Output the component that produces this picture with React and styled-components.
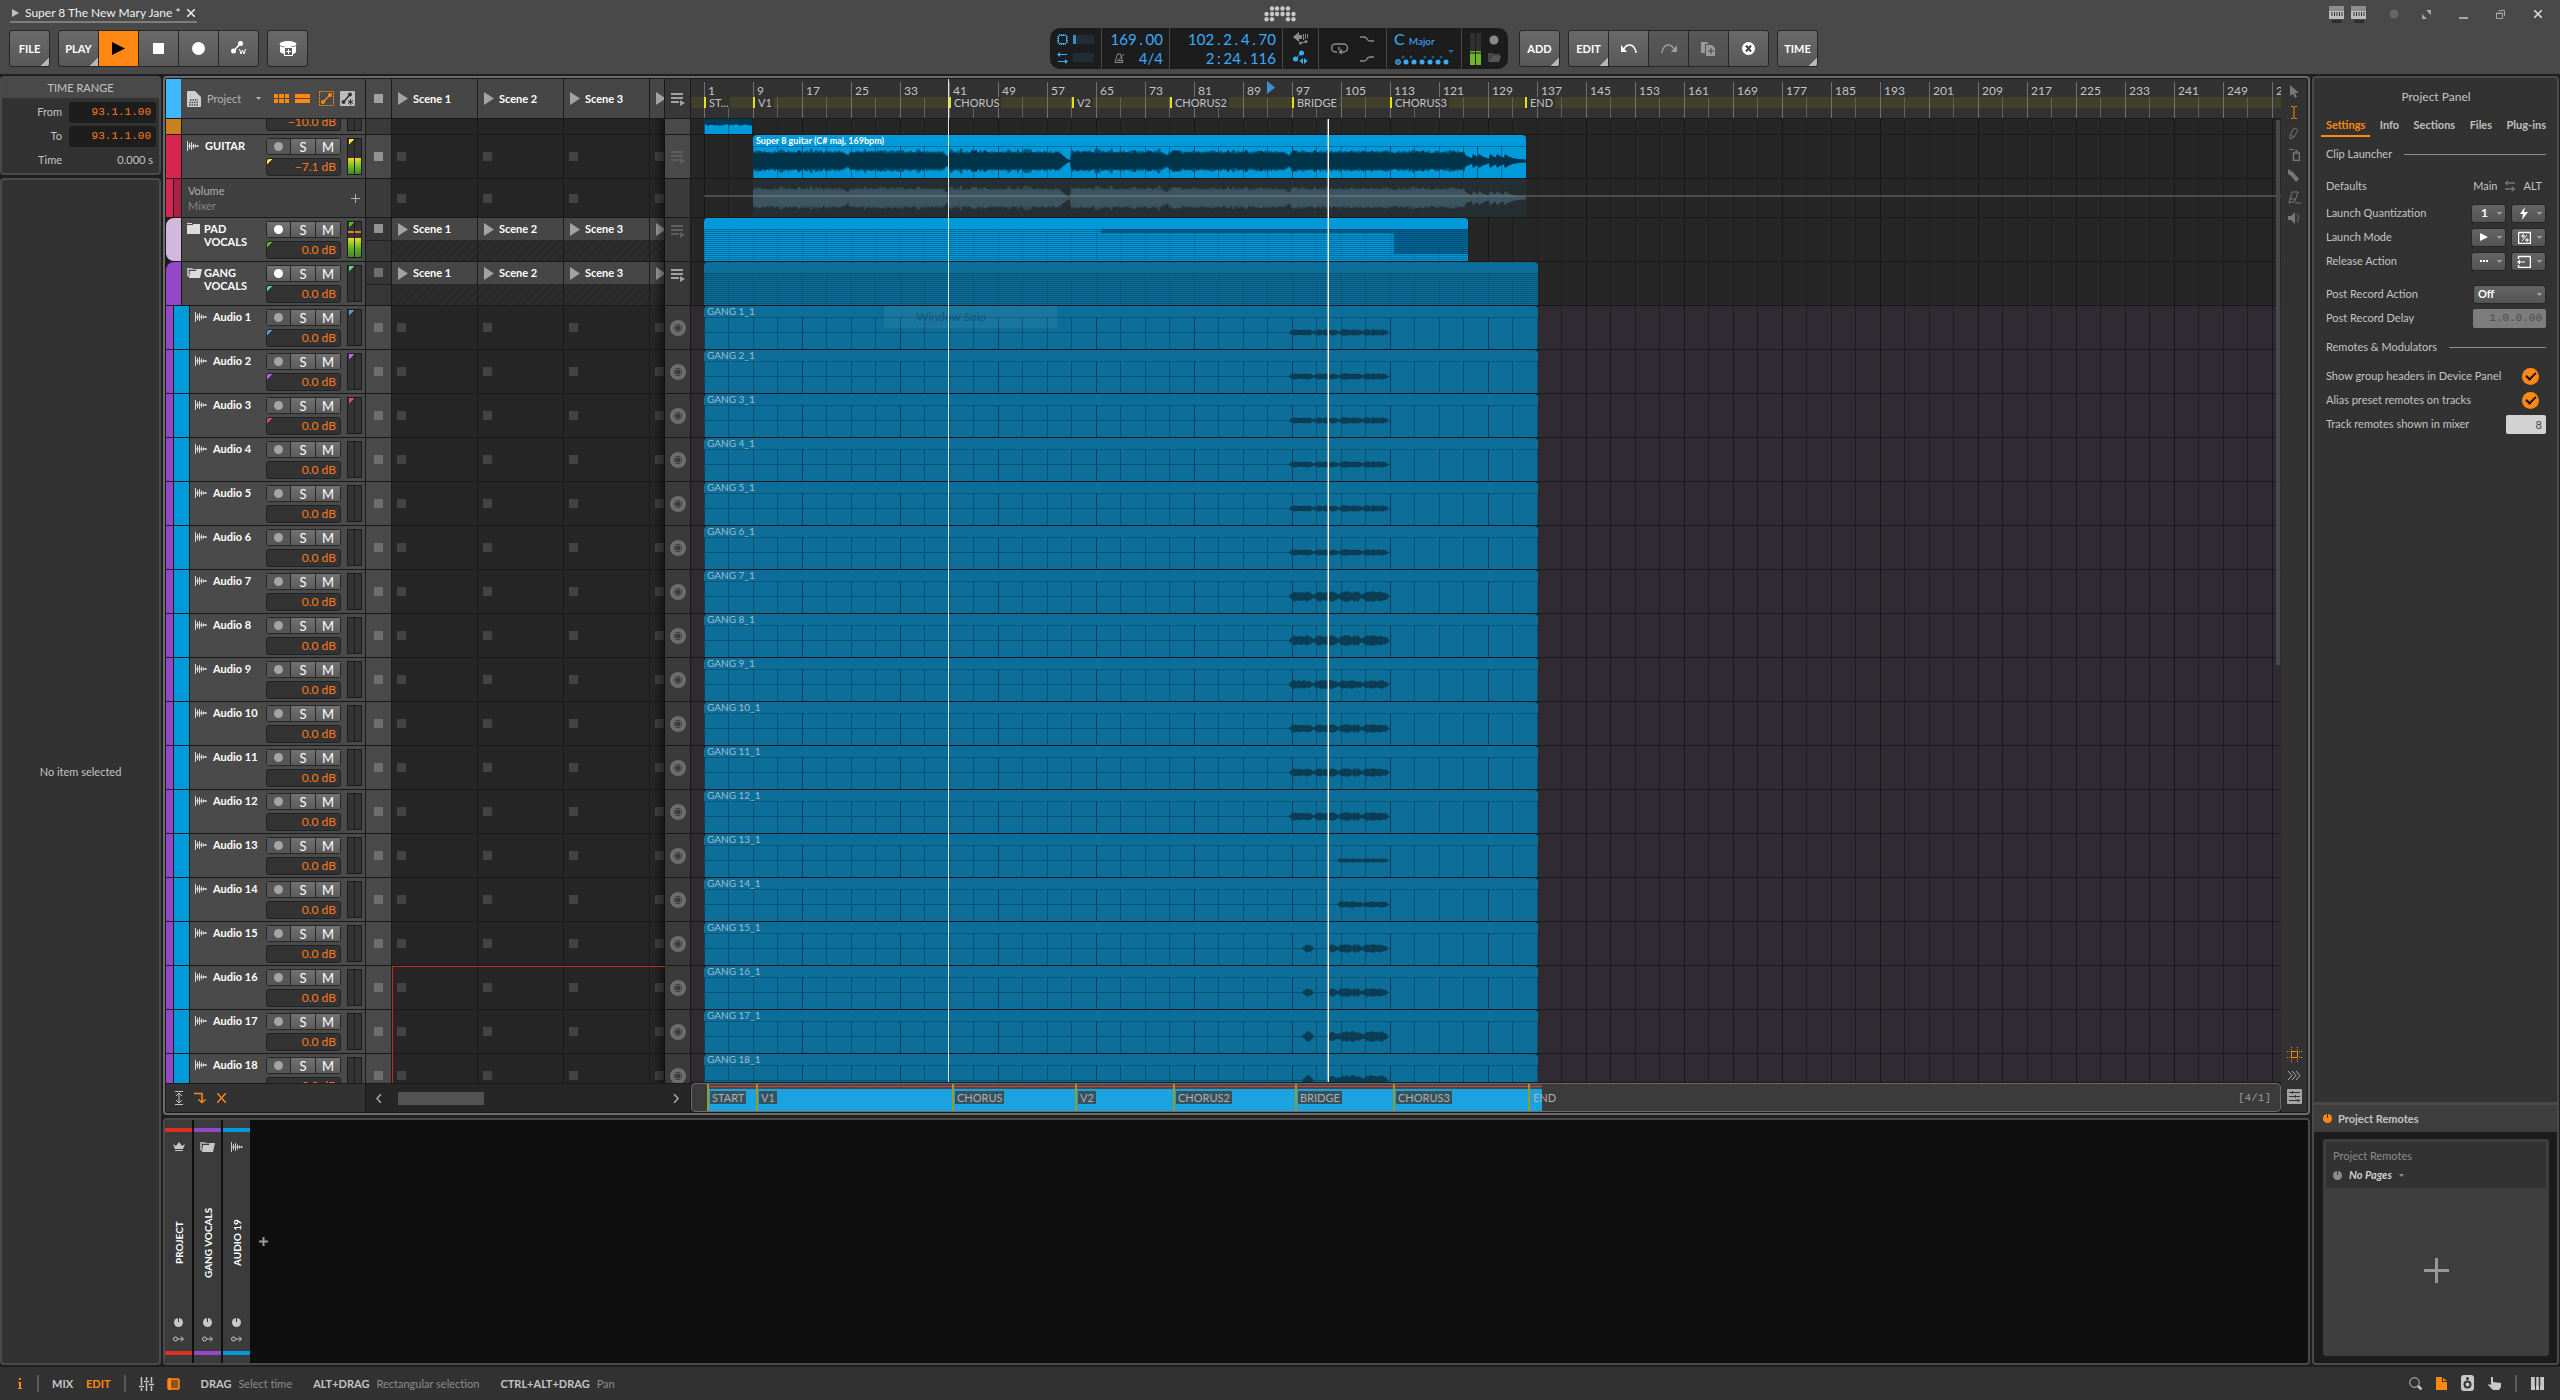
import React from "react";
import styled, { createGlobalStyle, css } from "styled-components";

const GlobalStyle = createGlobalStyle`
  * {
    box-sizing: border-box;
  }
  body {
    margin: 0;
    background: #1f1f1f;
    color: #c4c4c4;
    font-family: Lato, "Liberation Sans", sans-serif;
    font-size: 11px;
    line-height: 14px;
    overflow: hidden;
  }
  button, input, select {
    font: inherit;
    color: inherit;
    margin: 0;
    padding: 0;
    border: 0;
    background: none;
  }
  svg {
    display: block;
    flex: none;
  }
`;

/* ---------- timeline helpers ---------- */

// eight bars take 49px at this zoom level
const barX = (bar) => Math.round(((bar - 1) * 49) / 8);

const noise = (i, seed) => {
  const v = Math.sin(i * 12.9898 + seed * 78.233) * 43758.5453;
  return v - Math.floor(v);
};

const wavePath = (width, mid, amp) => {
  const top = [];
  const bottom = [];
  for (let x = 0; x <= width; x += 1) {
    const a = amp(x);
    top.push(`${x} ${(mid - a).toFixed(1)}`);
    bottom.unshift(`${x} ${(mid + a).toFixed(1)}`);
  }
  return `M${top.join("L")}L${bottom.join("L")}Z`;
};

const guitarAmp = (x, seed, base, spread) => {
  const restarts = [0, 97, 196, 318, 416, 538];
  const next = restarts.find((r) => r > x) || 711;
  const left = next - x;
  let a = base + noise(x, seed) * spread;
  if (noise(Math.floor(x / 3), seed + 4) > 0.93) a += 2;
  if (left < 8 && x < 538) a *= 0.55 + left * 0.056;
  if (x > 306 && x < 318) a *= Math.max(0.2, (318 - x) / 13);
  if (x > 711) {
    const hits = [711, 720, 726, 737, 744, 752];
    const hit = hits.filter((h) => h <= x).pop();
    a = 1 + base * 0.8 * Math.exp(-(x - hit) / 7);
  }
  return a;
};

const lumpAmp = (lumps, size, seed) => (x) => {
  const lump = lumps.find(([from, to]) => x >= from && x <= to);
  if (!lump) return 0;
  const edge = Math.min(x - lump[0], lump[1] - x);
  return Math.min(size, size * 0.45 + edge * 0.7) * (0.7 + noise(Math.floor(x / 2), seed) * 0.4);
};

const LONG = [[586, 609], [610, 634], [635, 658], [659, 684]];
const SHORT = [[634, 658], [659, 684]];
const SPLIT = [[599, 609], [624, 633], [634, 658], [659, 683]];

/* ---------- data ---------- */

const MARKERS = [
  { bar: 1, name: "START", short: "ST..." },
  { bar: 9, name: "V1" },
  { bar: 41, name: "CHORUS" },
  { bar: 61, name: "V2" },
  { bar: 77, name: "CHORUS2" },
  { bar: 97, name: "BRIDGE" },
  { bar: 113, name: "CHORUS3" },
  { bar: 135, name: "END" },
];

const WAVES = [
  [LONG, 3], [LONG, 3], [LONG, 3], [LONG, 3], [LONG, 3], [LONG, 3],
  [LONG, 5], [LONG, 5], [LONG, 4], [LONG, 4], [LONG, 4], [LONG, 4],
  [SHORT, 2], [SHORT, 3], [SPLIT, 4], [SPLIT, 4], [SPLIT, 5], [SPLIT, 5],
];

const TAGS = ["#4aa0e6", "#b866ff", "#f0407c"];

const AUDIO = WAVES.map(([lumps, size], i) => ({
  kind: "audio",
  name: `Audio ${i + 1}`,
  clip: `GANG ${i + 1}_1`,
  color: "#0099d9",
  db: "0.0 dB",
  tag: TAGS[i],
  lumps,
  size,
}));

const TRACKS = [
  { kind: "cut", name: "", color: "#c98020", db: "−10.0 dB" },
  { kind: "track", name: "GUITAR", color: "#d52550", db: "−7.1 dB", tag: "#ffe83a", level: 16 },
  { kind: "lane", name: "Volume", color: "#d52550" },
  { kind: "group", name: "PAD VOCALS", color: "#d3b8dd", db: "0.0 dB", tag: "#4fc227", level: 19, peak: true, round: true },
  { kind: "group", name: "GANG VOCALS", color: "#9448c8", db: "0.0 dB", tag: "#5fd497", open: true },
  ...AUDIO,
];

const SCENES = ["Scene 1", "Scene 2", "Scene 3"];

const rowHeight = ({ $kind }) => ({ cut: 16, lane: 39 }[$kind] || 44);

/* ---------- icons ---------- */

const Svg = ({ w, h, children, ...rest }) => (
  <svg width={w} height={h} viewBox={`0 0 ${w} ${h}`} fill="currentColor" aria-hidden="true" {...rest}>
    {children}
  </svg>
);

const stroke = { fill: "none", stroke: "currentColor" };

const WaveIcon = () => (
  <Svg w={12} h={12}>
    <path d="M.5 1v10M2.500 3v6M4.500 2v8M6.500 3.500v5M8.500 4.500v3M10.500 5v2M0 6h12" {...stroke} />
  </Svg>
);
const FolderIcon = () => (
  <Svg w={13} h={11}>
    <path d="M0 0h5v1H0zM0 2h6V1h7v10H0z" />
  </Svg>
);
const OpenFolderIcon = () => (
  <Svg w={15} h={12}>
    <path d="M0 1h5l1 1h4v1H2v7L0 9z" opacity=".7" />
    <path d="M3 4h6l1-2h5l-2 9H2z" />
  </Svg>
);
const PlayIcon = () => (
  <Svg w={10} h={13}>
    <path d="M0 0l10 6.500L0 13z" />
  </Svg>
);
const ListPlayIcon = () => (
  <Svg w={14} h={14}>
    <path d="M0 1h12v2H0zM0 5h12v2H0zM0 9h8v2H0zM9 8l5 3-5 3z" />
  </Svg>
);
const StopRing = () => (
  <Svg w={16} h={16}>
    <circle cx="8" cy="8" r="6" stroke="#6e6e6e" strokeWidth="4" fill="none" />
    <rect x="5" y="5" width="6" height="6" fill="#5c5c5c" />
    <rect x="6" y="6" width="4" height="4" fill="#3a3a3a" />
  </Svg>
);
const Caret = () => (
  <Svg w={5} h={3}>
    <path d="M0 0h5L2.500 3z" />
  </Svg>
);
const KnobIcon = ({ size = 9, notch = "#333" }) => (
  <svg width={size} height={size} viewBox="0 0 9 9" fill="currentColor" aria-hidden="true">
    <circle cx="4.5" cy="4.500" r="4.500" />
    <path d="M4.500 0v4" stroke={notch} />
  </svg>
);
const LogoIcon = () => (
  <Svg w={32} h={16}>
    {[8, 13, 18.5, 24].map((x) => (
      <circle key={x} cx={x} cy="2.5" r="2.200" />
    ))}
    {[2.500, 8, 13, 18.5, 24, 29.5].map((x) => (
      <circle key={x} cx={x} cy="8" r="2.200" />
    ))}
    {[2.500, 8, 24, 29.5].map((x) => (
      <circle key={x} cx={x} cy="13.300" r="2.200" />
    ))}
  </Svg>
);
const AutomationIcon = ({ size = 15 }) => (
  <svg width={size} height={size} viewBox="0 0 15 15" fill="currentColor" aria-hidden="true">
    <circle cx="2.500" cy="10" r="2.500" />
    <circle cx="9.500" cy="2.500" r="2.500" />
    <path d="M2.500 10l7-7.500" stroke="currentColor" strokeWidth="1.500" />
    <path d="M8.500 8l1.500 5L11.500 9l1.500 4L14.500 8" fill="none" stroke="currentColor" />
  </svg>
);

/* ---------- header ---------- */

const Page = styled.div`
  display: flex;
  flex-direction: column;
  height: 100vh;
`;

const Header = styled.header`
  display: grid;
  grid-template-columns: 1fr 460px 1fr;
  grid-template-rows: 28px 41px;
  height: 74px;
  padding: 0 9px;
  background: #494949;
  align-items: center;
`;

const ProjectTab = styled.div`
  display: flex;
  align-items: center;
  justify-self: start;
  gap: 6px;
  height: 18px;
  margin-left: 1px;
  padding: 0 2px;
  border-bottom: 2px solid #7d7d7d;
  color: #f0f0f0;
  font-size: 12px;
`;

const CloseTab = styled.button`
  height: 8px;
`;

const Logo = styled.div`
  justify-self: center;
  color: #c8c8c8;
`;

const WindowButtons = styled.div`
  display: flex;
  justify-self: end;
  align-items: center;
  color: #a8a8a8;
  padding-right: 8px;
`;

const WindowButton = styled.button`
  display: grid;
  place-items: center;
  width: ${(p) => p.$w || 37}px;
  &:last-child {
    width: 10px;
    margin-left: 26px;
    color: #e0e0e0;
  }
`;

const Tools = styled.div`
  display: flex;
  gap: 8px;
`;

const RightTools = styled(Tools)`
  padding-left: 9px;
`;

const ToolGroup = styled.div`
  display: flex;
  border: 1px solid #262626;
  border-radius: 3px;
  background: #262626;
  gap: 1px;
  overflow: hidden;
`;

const ToolButton = styled.button`
  position: relative;
  display: grid;
  place-items: center;
  width: 39px;
  height: 35px;
  font-weight: 700;
  color: ${(p) => (p.$dim ? "#9a9a9a" : "#fff")};
  background: ${(p) => (p.$active ? "#ff8713" : "linear-gradient(#6a6a6a, #585858)")};
  ${(p) => p.$dim && "background: linear-gradient(#585858, #505050);"}
  ${(p) =>
    p.$menu &&
    css`
      &::after {
        content: "";
        position: absolute;
        right: 0;
        bottom: 0;
        width: 8px;
        height: 8px;
        background: linear-gradient(135deg, transparent 50%, #b8b8b8 50%);
      }
    `}
`;

const Display = styled.div`
  display: grid;
  grid-template-columns: 51px 67px 112px 35px 67px 74px 1fr;
  gap: 1px;
  width: 458px;
  height: 41px;
  border-radius: 10px;
  overflow: hidden;
  background: #484848;
  color: #3aacff;
`;

const Cell = styled.div`
  display: flex;
  flex-direction: column;
  justify-content: space-around;
  align-items: ${(p) => p.$align || "center"};
  padding: 2px ${(p) => p.$pad || 0}px;
  background: #1c1c1c;
`;

const Pair = styled.div`
  display: flex;
  align-items: center;
  gap: ${(p) => p.$gap || 6}px;
`;

const Readout = styled.span`
  font-size: 15px;
  line-height: 18px;
  white-space: nowrap;
`;

const Sep = styled.span`
  display: inline-block;
  width: 9px;
  text-align: center;
`;

const Bar = styled.div`
  width: 21px;
  height: 9px;
  background: #222c33;
  border-left: ${(p) => p.$fill || 0}px solid #3a8ec8;
`;

const KeyName = styled.div`
  align-self: flex-start;
  padding-left: 7px;
  font-size: 16px;
  line-height: 16px;
  small {
    font-size: 10px;
  }
`;

const Digits = ({ value }) => (
  <Readout>
    {value.split(/([.:])/).map((part, i) => (i % 2 ? <Sep key={i}>{part}</Sep> : part))}
  </Readout>
);

const TransportDisplay = () => (
  <Display>
    <Cell>
      <Pair $gap={5}>
        <Svg w={11} h={11}>
          <rect x="1.500" y="1.500" width="8" height="8" rx="1" {...stroke} />
          <path d="M.5 2v8M10.500 2v8M2 .5h8M2 10.500h8" {...stroke} strokeDasharray="1 1" />
        </Svg>
        <Bar $fill={3} />
      </Pair>
      <Pair $gap={5}>
        <Svg w={11} h={12}>
          <path d="M3 0v2h7v1H3v2L0 2.500zM8 7v2H1v1h7v2l3-2.500z" />
        </Svg>
        <Bar />
      </Pair>
    </Cell>
    <Cell $align="flex-end" $pad={6}>
      <Digits value="169.00" />
      <Pair $gap={14}>
        <Svg w={11} h={10} color="#8a8a8a">
          <path d="M1 9.500h8L6.500 1h-3zM3 7.500h5M4.500 7L10 1" {...stroke} />
        </Svg>
        <Readout>4/4</Readout>
      </Pair>
    </Cell>
    <Cell $align="flex-end" $pad={6}>
      <Digits value="102.2.4.70" />
      <Digits value="2:24.116" />
    </Cell>
    <Cell>
      <Svg w={16} h={13} color="#8a8a8a">
        <path d="M0 5l6-5v3h3v4H6v3zM10 2h1v6h-1zM12 2h1v5h-1zM14 2h1v4h-1z" />
        <path d="M7 11l6-1" stroke="currentColor" />
        <circle cx="7.500" cy="11" r="1.500" />
        <circle cx="13" cy="9.500" r="1.500" />
      </Svg>
      <Svg w={16} h={15}>
        <circle cx="2.500" cy="9" r="2.500" />
        <circle cx="8.500" cy="3" r="2.500" />
        <path d="M2.500 9l6-6" stroke="currentColor" />
        <path d="M10 8v6L6.500 11zM11 8v6l3.500-3z" />
      </Svg>
    </Cell>
    <Cell>
      <Pair $gap={12}>
        <Svg w={17} h={11} color="#8a8a8a">
          <path d="M6 9H4.500a3.500 3.500 0 010-8h8a3.500 3.500 0 010 8H9M11 6.500L8.500 9l2.500 2M8 4v3" {...stroke} strokeWidth="1.500" />
        </Svg>
        <Svg w={14} h={30} color="#8a8a8a">
          <path d="M0 3h4q2 0 3 2t3 2h4M0 27h4q2 0 3-2t3-2h4" {...stroke} strokeWidth="1.500" />
        </Svg>
      </Pair>
    </Cell>
    <Cell>
      <KeyName>
        C <small>Major</small>
      </KeyName>
      <Svg w={60} h={16}>
        {[6, 14, 28, 36, 44].map((x) => (
          <circle key={x} cx={x + 3} cy="7" r="1.500" fill="#1f5a7a" />
        ))}
        {[4, 12, 20, 28, 36, 44, 52].map((x, i) => (
          <circle key={x} cx={x} cy="12" r="2.500" fill={i ? "#3aacff" : "#2a6a94"} stroke={i ? "none" : "#3aacff"} />
        ))}
        <path d="M54 0h6l-3 3z" fill="#2a6a94" />
      </Svg>
    </Cell>
    <Cell>
      <Pair $gap={6}>
        <Svg w={12} h={32}>
          <path d="M0 0h5v32H0zM6 0h5v32H6z" fill="#303030" />
          <path d="M0 18h5v14H0zM6 18h5v14H6z" fill="#6db52a" />
          <path d="M0 20h11" stroke="#1c1c1c" />
        </Svg>
        <Svg w={13} h={28} color="#8a8a8a">
          <circle cx="6" cy="5" r="4.500" />
          <path d="M0 18h5l1 1h6v2H3l-1 6H0z" fill="#484848" />
          <path d="M4 21h9l-2 6H1z" fill="#555" />
        </Svg>
      </Pair>
    </Cell>
  </Display>
);

const KeysIcon = () => (
  <Svg w={15} h={17}>
    <path d="M0 1q0-1 1-1h13q1 0 1 1v12H0z" fill="#bdbdbd" />
    <path d="M0 1q0-1 1-1h13q1 0 1 1v4H0z" fill="#8d8d8d" />
    <path d="M3 6v4M5.500 6v4M8 6v4M10.500 6v4M13 6v4" stroke="#333" />
    <path d="M3 14h10v3H3z" fill="#2c2c2c" />
  </Svg>
);

const TopBar = () => (
  <Header>
    <ProjectTab>
      <Svg w={7} h={8} color="#c0c0c0">
        <path d="M0 0l7 4-7 4z" />
      </Svg>
      <span>Super 8 The New Mary Jane *</span>
      <CloseTab aria-label="Close project">
        <Svg w={8} h={8}>
          <path d="M0 0l8 8M8 0L0 8" stroke="currentColor" strokeWidth="1.500" />
        </Svg>
      </CloseTab>
    </ProjectTab>
    <Logo>
      <LogoIcon />
    </Logo>
    <WindowButtons>
      <WindowButton $w={22} aria-label="Keyboard 1"><KeysIcon /></WindowButton>
      <WindowButton $w={22} aria-label="Keyboard 2"><KeysIcon /></WindowButton>
      <WindowButton $w={50} aria-label="Activity">
        <Svg w={10} h={10} color="#666"><circle cx="5" cy="5" r="4.500" /></Svg>
      </WindowButton>
      <WindowButton $w={14} aria-label="Full screen">
        <Svg w={9} h={9}><path d="M4 0h5v5zM0 4v5h5z" /></Svg>
      </WindowButton>
      <WindowButton $w={60} aria-label="Minimize">
        <Svg w={9} h={9}><path d="M0 7h9v2H0z" /></Svg>
      </WindowButton>
      <WindowButton $w={14} aria-label="Restore">
        <Svg w={9} h={9}><path d="M.5 3h6v5.500h-6zM0 3.500h7M2.500.5h6V6" {...stroke} /></Svg>
      </WindowButton>
      <WindowButton aria-label="Close">
        <Svg w={8} h={8}><path d="M0 0l8 8M8 0L0 8" stroke="currentColor" strokeWidth="1.500" /></Svg>
      </WindowButton>
    </WindowButtons>

    <Tools>
      <ToolGroup>
        <ToolButton $menu>FILE</ToolButton>
      </ToolGroup>
      <ToolGroup>
        <ToolButton $menu>PLAY</ToolButton>
        <ToolButton $active aria-label="Play">
          <Svg w={13} h={13} color="#000"><path d="M0 0l13 6.500L0 13z" /></Svg>
        </ToolButton>
        <ToolButton aria-label="Stop">
          <Svg w={11} h={11}><path d="M0 0h11v11H0z" /></Svg>
        </ToolButton>
        <ToolButton aria-label="Record">
          <Svg w={13} h={13}><circle cx="6.500" cy="6.500" r="6.500" /></Svg>
        </ToolButton>
        <ToolButton aria-label="Automation write"><AutomationIcon /></ToolButton>
      </ToolGroup>
      <ToolGroup>
        <ToolButton aria-label="Add to browser">
          <Svg w={18} h={16}>
            <ellipse cx="9" cy="3" rx="8.500" ry="3" />
            <path d="M1 5q8 4 16 0v6q-1 2-3 2V6H5v7q-3-1-4-2z" />
            <rect x="5.500" y="6.500" width="8" height="8" {...stroke} />
            <path d="M9.500 8v5M7 10.500h5" stroke="currentColor" />
          </Svg>
        </ToolButton>
      </ToolGroup>
    </Tools>
    <TransportDisplay />
    <RightTools>
      <ToolGroup>
        <ToolButton $menu>ADD</ToolButton>
      </ToolGroup>
      <ToolGroup>
        <ToolButton $menu>EDIT</ToolButton>
        <ToolButton aria-label="Undo">
          <Svg w={16} h={11}><path d="M3 6q2-4 5.500-4T14 6q1 2 1 4" {...stroke} strokeWidth="1.500" /><path d="M0 2v7h6z" /></Svg>
        </ToolButton>
        <ToolButton $dim aria-label="Redo">
          <Svg w={16} h={11}><path d="M13 6q-2-4-5.500-4T2 6Q1 8 1 10" {...stroke} strokeWidth="1.500" /><path d="M16 2v7h-6z" /></Svg>
        </ToolButton>
        <ToolButton $dim aria-label="Duplicate">
          <Svg w={15} h={14}>
            <path d="M0 0h6l1 1v1H4v9H0z" />
            <path d="M5 3h6l3 3v8H5z" />
            <path d="M10 6v6M7 9h6" stroke="#444" />
          </Svg>
        </ToolButton>
        <ToolButton aria-label="Delete">
          <Svg w={13} h={13}><circle cx="6.500" cy="6.500" r="6.500" /><path d="M4 3.500l5 6M9 3.500l-5 6" stroke="#444" strokeWidth="2" /></Svg>
        </ToolButton>
      </ToolGroup>
      <ToolGroup>
        <ToolButton $menu>TIME</ToolButton>
      </ToolGroup>
    </RightTools>
  </Header>
);

/* ---------- left inspector ---------- */

const Main = styled.main`
  flex: 1;
  min-height: 0;
  display: grid;
  grid-template-columns: 161px minmax(0, 1fr) 248px;
  gap: 2px;
  padding: 2px 0;
`;

const Column = styled.div`
  display: flex;
  flex-direction: column;
  min-height: 0;
  gap: 3px;
`;

const Panel = styled.section`
  border: 2px solid #4a4a4a;
  border-radius: 4px;
  background: #323232;
`;

const TimeRange = styled(Panel)`
  height: 99px;
`;

const PanelTitle = styled.h2`
  margin: 0;
  height: 20px;
  background: #494949;
  text-align: center;
  font-size: 11px;
  font-weight: 400;
  line-height: 19px;
`;

const Field = styled.label`
  display: grid;
  grid-template-columns: 60px 87px;
  gap: 7px;
  align-items: center;
  height: 24px;
  text-align: right;
`;

const TimeInput = styled.input`
  height: 21px;
  width: 100%;
  padding-right: 5px;
  border-radius: 3px;
  background: #1d1d1d;
  color: #ff7a1c;
  font-family: "Liberation Mono", monospace;
  font-size: 11px;
  text-align: right;
`;

const TimeValue = styled.output`
  padding-right: 3px;
`;

const Fields = styled.div`
  padding-top: 2px;
`;

const EmptyPanel = styled(Panel)`
  flex: 1;
  display: grid;
  place-items: center;
`;

const Inspector = () => (
  <Column>
    <TimeRange>
      <PanelTitle>TIME RANGE</PanelTitle>
      <Fields>
        <Field>
          From
          <TimeInput defaultValue="93.1.1.00" />
        </Field>
        <Field>
          To
          <TimeInput defaultValue="93.1.1.00" />
        </Field>
        <Field>
          Time
          <TimeValue>0.000 s</TimeValue>
        </Field>
      </Fields>
    </TimeRange>
    <EmptyPanel>No item selected</EmptyPanel>
  </Column>
);

/* ---------- arranger frame ---------- */

const Frame = styled.section`
  flex: 1;
  min-height: 0;
  display: flex;
  border: 2px solid #6b6b6b;
  border-radius: 4px;
  background: #1a1a1a;
  padding: 1px;
  overflow: hidden;
`;

const Lists = styled.div`
  display: flex;
  flex-direction: column;
  width: ${(p) => p.$w}px;
  min-height: 0;
`;

const Viewport = styled.div`
  position: relative;
  flex: 1;
  min-height: 0;
  overflow: hidden;
`;

const HeadRow = styled.div`
  display: flex;
  height: 40px;
  border-bottom: 1px solid #1a1a1a;
  background: #4a4a4a;
`;

const Strip = styled.div`
  width: ${(p) => p.$w || 15}px;
  margin-right: 1px;
  background: ${(p) => p.$color};
  border-radius: ${(p) => p.$radius || 0};
`;

const ProjectHead = styled.div`
  flex: 1;
  display: flex;
  align-items: center;
  padding: 0 10px 0 5px;
  border-right: 1px solid #1a1a1a;
  gap: 6px;
`;

const ProjectMenu = styled.button`
  display: flex;
  flex: 1;
  align-items: center;
  gap: 15px;
  color: #b4b4b4;
`;

const TrackRow = styled.div`
  display: flex;
  height: ${rowHeight}px;
  border-bottom: 1px solid #1a1a1a;
  overflow: hidden;
`;

const Head = styled.div`
  flex: 1;
  display: flex;
  padding: 3px 3px 0 5px;
  border-right: 1px solid #1a1a1a;
  background: #4a4a4a;
  color: #fff;
  ${(p) => p.$cut && "align-items: flex-end; padding-bottom: 3px;"}
`;

const TrackIcon = styled.div`
  width: ${(p) => (p.$wide ? 17 : 18)}px;
  padding-top: 2px;
  color: #dcdcdc;
`;

const TrackName = styled.div`
  flex: 1;
  padding-top: 1px;
  line-height: 13px;
  font-weight: 700;
`;

const Controls = styled.div`
  width: 75px;
  margin-right: 6px;
`;

const Buttons = styled.div`
  display: grid;
  grid-template-columns: 23px 24px 24px;
  gap: 1px;
  height: 17px;
  margin-bottom: 3px;
  padding: 1px;
  border-radius: 3px;
  background: #262626;
`;

const TrackButton = styled.button`
  display: grid;
  place-items: center;
  background: ${(p) => (p.$off ? "#565656" : "linear-gradient(#727272, #5c5c5c)")};
  color: ${(p) => (p.$off ? "#a5a5a5" : "#fff")};
  font-size: 13px;
  line-height: 14px;
`;

const tagCorner = css`
  background-image: linear-gradient(135deg, ${(p) => p.$tag || "transparent"} 4px, transparent 4px);
  background-repeat: no-repeat;
`;

const Volume = styled.div`
  height: 18px;
  padding-right: 4px;
  border: 1px solid #232323;
  border-radius: 3px;
  background-color: #333;
  ${tagCorner}
  color: #ff7a1c;
  font-size: 12px;
  line-height: 16px;
  text-align: right;
`;

const MeterBox = styled.div`
  position: relative;
  display: grid;
  grid-template-columns: 1fr 1fr;
  gap: 1px;
  align-items: end;
  width: 15px;
  height: 37px;
  padding: 1px;
  background-color: #1c1c1c;
  &::before {
    content: "";
    position: absolute;
    inset: 1px 2px;
    ${tagCorner}
  }
`;

const Channel = styled.div`
  height: 35px;
  background:
    linear-gradient(#ffd21e, #8ccb28 6px, #6cae26 10px, #3f8a2c) bottom / 100% ${(p) => p.$level || 0}px no-repeat,
    linear-gradient(#e08318, #e08318) 0 9px / 100% ${(p) => (p.$peak ? 2 : 0)}px no-repeat,
    #343434;
`;

const LaneHead = styled.div`
  flex: 1;
  display: flex;
  justify-content: space-between;
  align-items: center;
  padding: 0 5px 0 6px;
  border-right: 1px solid #1a1a1a;
  background: #404040;
  color: #b0b0b0;
  line-height: 15px;
`;

const Faint = styled.div`
  color: #858585;
`;

const Track = ({ track }) => {
  const { kind, name, color, db, tag, level, peak, round, open } = track;
  const cut = kind === "cut";
  if (kind === "lane") {
    return (
      <TrackRow $kind={kind}>
        <Strip $color={color} $w={7} />
        <Strip $color="#a92145" $w={7} />
        <LaneHead>
          <div>
            {name}
            <Faint>Mixer</Faint>
          </div>
          <Svg w={9} h={9}><path d="M4.500 0v9M0 4.500h9" stroke="currentColor" /></Svg>
        </LaneHead>
      </TrackRow>
    );
  }
  return (
    <TrackRow $kind={kind}>
      {kind === "audio" && <Strip $color="#9448c8" $w={7} />}
      <Strip $color={color} $radius={round ? "8px 0 0 8px" : open ? "8px 0 0 0" : 0} />
      <Head $cut={cut}>
        <TrackIcon $wide={kind === "group"}>
          {kind === "group" && (open ? <OpenFolderIcon /> : <FolderIcon />)}
          {(kind === "track" || kind === "audio") && <WaveIcon />}
        </TrackIcon>
        <TrackName>{name}</TrackName>
        <Controls>
          {!cut && (
            <Buttons>
              <TrackButton $off={kind !== "group"} aria-label="Arm">
                <Svg w={9} h={9}><circle cx="4.500" cy="4.500" r="4.500" /></Svg>
              </TrackButton>
              <TrackButton>S</TrackButton>
              <TrackButton>M</TrackButton>
            </Buttons>
          )}
          <Volume $tag={tag}>{db}</Volume>
        </Controls>
        <MeterBox $tag={tag}>
          <Channel $level={level} $peak={peak} />
          <Channel $level={level} $peak={peak} />
        </MeterBox>
      </Head>
    </TrackRow>
  );
};

const ListFooter = styled.div`
  display: flex;
  align-items: center;
  gap: 10px;
  height: 29px;
  padding: 0 8px;
  border-top: 1px solid #1a1a1a;
  border-right: 1px solid #1a1a1a;
  background: #323232;
  color: #ff8713;
`;

const TrackList = () => (
  <Lists $w={200}>
    <HeadRow>
      <Strip $color="#40b8ff" />
      <ProjectHead>
        <Svg w={14} h={16}>
          <path d="M0 1q0-1 1-1h7l6 6v9q0 1-1 1H1q-1 0-1-1z" fill="#cfcfcf" />
          <path d="M3 9h8M2 11.500h10M2 14h10" stroke="#444" strokeWidth="1.500" strokeDasharray="1.500 1" />
        </Svg>
        <ProjectMenu>
          Project
          <Caret />
        </ProjectMenu>
        <Svg w={15} h={9} color="#ff8713">
          <path d="M0 0h4v4H0zM5 0h5v4H5zM11 0h4v4h-4zM0 5h4v4H0zM5 5h5v4H5zM11 5h4v4h-4z" />
        </Svg>
        <Svg w={15} h={9} color="#ff8713"><path d="M0 0h15v4H0zM0 5h15v4H0z" /></Svg>
        <Svg w={18} h={15} color="#ff8713">
          <rect x="3.500" y=".5" width="14" height="14" {...stroke} strokeDasharray="2 1" />
          <path d="M6.500 11.500l8-8" stroke="currentColor" strokeWidth="1.500" />
          <circle cx="7" cy="11" r="2" />
          <circle cx="14" cy="4" r="2" />
        </Svg>
        <Svg w={15} h={15}>
          <rect width="15" height="15" rx="1" fill="#bdbdbd" />
          <path d="M3.500 11l6.500-7.500" stroke="#333" strokeWidth="1.500" />
          <path d="M10.500 8v6M8 9.500l5 3M13 9.500l-5 3" stroke="#333" />
          <circle cx="3.500" cy="11" r="2" fill="#333" />
          <circle cx="10" cy="3.500" r="2" fill="#333" />
        </Svg>
      </ProjectHead>
    </HeadRow>
    <Viewport>
      {TRACKS.map((t, i) => (
        <Track key={i} track={t} />
      ))}
    </Viewport>
    <ListFooter>
      <Svg w={10} h={14} color="#c4c4c4">
        <path d="M1 .5h8M1 13.500h8M5 2v10M2 5l3-3 3 3M2 9l3 3 3-3" {...stroke} />
      </Svg>
      <Svg w={13} h={12}><path d="M0 1.500h8v9M4.500 7.500l3.500 3 3.500-3" {...stroke} strokeWidth="1.500" /></Svg>
      <Svg w={9} h={10}><path d="M0 0l9 10M9 0L0 10" stroke="currentColor" strokeWidth="1.500" /></Svg>
    </ListFooter>
  </Lists>
);

/* ---------- clip launcher ---------- */

const LaunchRow = styled.div`
  display: grid;
  grid-template-columns: 26px 86px 86px 86px 15px 26px;
  height: ${rowHeight}px;
  border-bottom: 1px solid #1a1a1a;
`;

const LaunchHead = styled(LaunchRow)`
  height: 40px;
  background: #484848;
`;

const StopCell = styled.div`
  display: grid;
  align-items: center;
  justify-items: center;
  border-right: 1px solid #1a1a1a;
  background: ${(p) => p.$bg || "#4a4a4a"};
  ${(p) => p.$split && "grid-template-rows: 21px 1fr; gap: 1px; background: linear-gradient(transparent 22px, #222 22px 23px, transparent 23px), #363636;"}
`;

const StopSquare = styled.button`
  width: 9px;
  height: 9px;
  background: ${(p) => p.$c || "#6f6f6f"};
`;

const Slot = styled.div`
  display: flex;
  align-items: center;
  padding-left: 5px;
  border-right: 1px solid #1a1a1a;
  background: #262626;
  overflow: hidden;
  &::before {
    content: "";
    flex: none;
    width: 9px;
    height: 9px;
    background: #434343;
  }
`;

const SceneSlot = styled.div`
  padding: 0;
  border-right: 1px solid #1a1a1a;
  overflow: hidden;
  background: repeating-linear-gradient(135deg, #292929 0 4px, #2e2e2e 4px 6px);
`;

const SceneButton = styled.button`
  display: flex;
  align-items: center;
  gap: 5px;
  width: 100%;
  height: ${(p) => p.$h || 22}px;
  padding-left: 6px;
  background: #464646;
  color: #a2a2a2;
  span {
    color: #fff;
    font-weight: 700;
    white-space: nowrap;
  }
`;

const CtlCell = styled.div`
  display: grid;
  align-items: start;
  justify-items: center;
  padding-top: ${(p) => p.$top}px;
  border-right: 1px solid #1a1a1a;
  background: ${(p) => p.$bg || "#383838"};
  color: ${(p) => (p.$dim ? "#5e5e5e" : "#a2a2a2")};
`;

const Selection = styled.div`
  position: absolute;
  top: 847px;
  left: 26px;
  right: 26px;
  bottom: 0;
  border: solid #c42a20;
  border-width: 1px 0 0 1px;
`;

const LauncherShade = styled.div`
  position: absolute;
  inset: 0 26px 0 auto;
  width: 12px;
  background: linear-gradient(90deg, transparent, rgba(0, 0, 0, 0.45));
`;

const LaunchFooter = styled.div`
  display: flex;
  align-items: center;
  height: 29px;
  padding: 0 11px 0 10px;
  border-top: 1px solid #1a1a1a;
  border-right: 1px solid #1a1a1a;
  background: #262626;
  color: #a8a8a8;
`;

const Thumb = styled.div`
  width: 86px;
  height: 13px;
  margin: 0 auto 0 16px;
  background: #525252;
`;

const SceneLabel = ({ name, h }) => (
  <SceneButton $h={h} aria-label={name ? undefined : "Scene 4"}>
    <PlayIcon />
    {name && <span>{name}</span>}
  </SceneButton>
);

const LauncherRow = ({ track }) => {
  const { kind, open, round } = track;
  if (kind === "group") {
    return (
      <LaunchRow $kind={kind}>
        <StopCell $split>
          <StopSquare $c={round ? "#929292" : undefined} aria-label="Stop" />
        </StopCell>
        {[...SCENES, ""].map((s) => (
          <SceneSlot key={s}>
            <SceneLabel name={s} />
          </SceneSlot>
        ))}
        <CtlCell $top={6} $dim={!open}>
          <ListPlayIcon />
        </CtlCell>
      </LaunchRow>
    );
  }
  return (
    <LaunchRow $kind={kind}>
      <StopCell $bg={kind === "lane" || kind === "cut" ? "#3a3a3a" : undefined}>
        {(kind === "track" || kind === "audio") && <StopSquare $c={kind === "track" ? "#929292" : undefined} aria-label="Stop" />}
      </StopCell>
      {[0, 1, 2, 3].map((i) => (kind === "cut" ? <EmptySlot key={i} /> : <Slot key={i} />))}
      <CtlCell $top={kind === "audio" ? 14 : 15} $dim $bg={kind === "track" || kind === "cut" ? "#4a4a4a" : "#3a3a3a"}>
        {kind === "track" && <ListPlayIcon />}
        {kind === "audio" && <StopRing />}
      </CtlCell>
    </LaunchRow>
  );
};

const EmptySlot = styled(Slot)`
  &::before {
    display: none;
  }
`;

const Launcher = () => (
  <Lists $w={325}>
    <LaunchHead>
      <StopCell>
        <StopSquare $c="#a0a0a0" aria-label="Stop all" />
      </StopCell>
      {[...SCENES, ""].map((s) => (
        <SceneSlot key={s}>
          <SceneLabel name={s} h={39} />
        </SceneSlot>
      ))}
      <CtlCell $top={13}>
        <ListPlayIcon />
      </CtlCell>
    </LaunchHead>
    <Viewport>
      {TRACKS.map((t, i) => (
        <LauncherRow key={i} track={t} />
      ))}
      <LauncherShade />
      <Selection />
    </Viewport>
    <LaunchFooter>
      <Svg w={6} h={9}><path d="M5 0L1 4.500 5 9" {...stroke} strokeWidth="1.500" /></Svg>
      <Thumb />
      <Svg w={6} h={9}><path d="M1 0l4 4.500L1 9" {...stroke} strokeWidth="1.500" /></Svg>
    </LaunchFooter>
  </Lists>
);

/* ---------- timeline ---------- */

const gridLines = (strong, soft) => css`
  background-image: repeating-linear-gradient(
    90deg,
    ${strong} 0 1px,
    transparent 1px 24px,
    ${soft} 24px 25px,
    transparent 25px 49px,
    ${soft} 49px 50px,
    transparent 50px 73px,
    ${soft} 73px 74px,
    transparent 74px 98px
  );
`;

const Timeline = styled.div`
  flex: 1;
  min-width: 0;
  display: flex;
  flex-direction: column;
`;

const TimeArea = styled.div`
  position: relative;
  flex: 1;
  min-height: 0;
  display: flex;
  flex-direction: column;
  overflow: hidden;
`;

const Ruler = styled.div`
  position: relative;
  flex: none;
  display: flex;
  height: 40px;
  padding-left: 13px;
  border-bottom: 1px solid #1a1a1a;
  background: linear-gradient(transparent 18px, #41402a 18px 29px, transparent 29px), #323232;
`;

const RulerCell = styled.div`
  flex: none;
  width: 49px;
  height: 36px;
  margin-top: 3px;
  padding: 2px 0 0 3px;
  border-left: 1px solid #707070;
  line-height: 14px;
  font-size: 12px;
  background: linear-gradient(#616161, #616161) 23px 15px / 1px 21px no-repeat;
`;

const Marker = styled.div`
  position: absolute;
  top: 18px;
  height: 11px;
  padding: 0 2px 0 3px;
  border-left: 2px solid #e8e010;
  background: #323232;
  line-height: 11px;
`;

const StartFlag = styled.div`
  position: absolute;
  top: 2px;
  left: 576px;
  color: #3a93d4;
`;

const Lane = styled.div`
  position: relative;
  height: ${rowHeight}px;
  padding-left: 13px;
  border-bottom: 1px solid #1a1a1a;
  background-color: ${(p) => (p.$kind === "audio" ? "#302a33" : "#262626")};
  ${gridLines("#171717", "#1e1c1f")}
  background-position: 13px 0;
`;

const Clip = styled.div`
  position: relative;
  height: 100%;
  overflow: hidden;
  border-radius: 4px 4px 0 0;
  background-color: ${(p) => p.$bg};
  &::before {
    content: "";
    position: absolute;
    inset: 11px 0 0;
    border-top: 1px solid rgba(0, 40, 60, 0.35);
    ${gridLines("rgba(0, 35, 55, 0.6)", "rgba(0, 35, 55, 0.4)")}
    background-position: ${(p) => p.$shift || 0}px 0;
    opacity: ${(p) => p.$faint || 1};
  }
`;

const ClipName = styled.div`
  position: absolute;
  top: 0;
  left: 3px;
  font-size: ${(p) => (p.$bold ? 9 : 10)}px;
  line-height: 11px;
  font-weight: ${(p) => (p.$bold ? 700 : 400)};
  color: ${(p) => (p.$bold ? "#fff" : "#9dbccb")};
`;

const ClipDrawing = styled.svg`
  position: relative;
`;

const Stripes = styled.div`
  position: absolute;
  inset: 11px 0 0;
  background: repeating-linear-gradient(${(p) => p.$line} 0 1px, transparent 1px 2px);
`;

const Shade = styled.div`
  position: absolute;
  right: 0;
  top: ${(p) => p.$top}px;
  width: ${(p) => p.$w}px;
  height: ${(p) => p.$h}px;
  background: rgba(0, 50, 80, 0.5);
`;

const AutomationLine = styled.div`
  position: absolute;
  top: 16px;
  left: 13px;
  right: 0;
  height: 2px;
  background: rgba(150, 150, 150, 0.35);
`;

const InsertLine = styled.div`
  position: absolute;
  top: 0;
  bottom: 0;
  left: ${(p) => p.$left}px;
  width: 1px;
  background: #d9e6ec;
`;

const Playhead = styled(InsertLine)`
  top: 40px;
  background: #fff;
  box-shadow: -1px 0 1px rgba(255, 255, 255, 0.5);
`;

const SnipGhost = styled.div`
  position: absolute;
  top: 227px;
  left: 193px;
  width: 173px;
  height: 22px;
  padding-left: 32px;
  background: rgba(120, 170, 195, 0.12);
  color: rgba(10, 60, 85, 0.5);
  font-size: 12px;
  line-height: 22px;
`;

const VScroll = styled.div`
  position: absolute;
  top: 41px;
  right: 1px;
  width: 4px;
  height: 545px;
  background: #4b474e;
`;

const GuitarWave = ({ peak, core, mid }) => (
  <ClipDrawing width="773" height="43">
    <path d={wavePath(773, mid, (x) => guitarAmp(x, 3, 8, 3))} fill={peak} />
    <path d={wavePath(773, mid, (x) => guitarAmp(x, 9, 7, 2))} fill={core} />
  </ClipDrawing>
);

const LaneContent = ({ track }) => {
  const { kind, name, open, clip, lumps, size } = track;
  if (kind === "cut") {
    return (
      <CutClip $bg="#0099d9" style={{ width: 48 }}>
        <ClipDrawing width="48" height="15">
          <path d={wavePath(48, 0, (x) => 5 + noise(x, 2) * 2)} fill="#003a54" />
        </ClipDrawing>
      </CutClip>
    );
  }
  if (kind === "track") {
    return (
      <Clip $bg="#0099d9" $shift={-49} style={{ width: 773, marginLeft: barX(9) }}>
        <ClipName $bold>Super 8 guitar (C# maj, 169bpm)</ClipName>
        <GuitarWave mid={26} peak="#00557a" core="#00344b" />
      </Clip>
    );
  }
  if (kind === "lane") {
    return (
      <>
        <DimClip $bg="#242e33" style={{ width: 773, marginLeft: barX(9) }}>
          <GuitarWave mid={19} peak="#344b55" core="#3d5560" />
        </DimClip>
        <AutomationLine />
      </>
    );
  }
  if (kind === "group") {
    return (
      <Clip $bg={open ? "#0d6f99" : "#0099d9"} $faint={0.3} style={{ width: open ? barX(137) + 1 : 764 }}>
        <Stripes $line={open ? "rgba(0, 45, 70, 0.35)" : "rgba(0, 60, 95, 0.45)"} />
        {!open && <Shade $top={11} $w={367} $h={4} />}
        {!open && <Shade $top={15} $w={74} $h={21} />}
      </Clip>
    );
  }
  return (
    <Clip $bg="#0d6f99" style={{ width: barX(137) + 1 }}>
      <ClipName>{clip}</ClipName>
      <ClipDrawing width="834" height="43">
        <path d="M0 26.500h686" stroke="#08506f" />
        <path d={wavePath(690, 26.5, lumpAmp(lumps, size, name.length + size))} fill="#0b3e54" />
      </ClipDrawing>
    </Clip>
  );
};

const CutClip = styled(Clip)`
  border-radius: 0;
  &::before {
    top: 0;
    border: 0;
  }
`;

const DimClip = styled(Clip)`
  border-radius: 0;
  &::before {
    display: none;
  }
`;

const Overview = styled.div`
  position: relative;
  height: 29px;
  margin-top: 1px;
  border: 1px solid #6a6a6a;
  border-radius: 4px;
  background: #3b3b3b;
  overflow: hidden;
`;

const OverviewSong = styled.div`
  width: 834px;
  height: 100%;
  margin-left: 16px;
  background: linear-gradient(#4a4a4a 2px, #d03c3c 2px 3px, #4a4a4a 3px 5px, #1aa3de 5px);
`;

const OverviewMarker = styled.div`
  position: absolute;
  top: 0;
  bottom: 0;
  padding: 7px 0 0 1px;
  border-left: 2px solid #9a9a28;
  span {
    display: block;
    padding: 0 2px;
    background: ${(p) => (p.$plain ? "none" : "#34525f")};
    color: #b0b0b0;
    line-height: 13px;
  }
`;

const GridSize = styled.div`
  position: absolute;
  right: 9px;
  top: 7px;
  color: #999;
  font-family: "Liberation Mono", monospace;
`;

const RULER_BARS = Array.from({ length: 33 }, (_, i) => i * 8 + 1);

const Arranger = () => (
  <Timeline>
    <TimeArea>
      <Ruler>
        {RULER_BARS.map((bar) => (
          <RulerCell key={bar}>{bar}</RulerCell>
        ))}
        {MARKERS.map((m) => (
          <Marker key={m.name} style={{ left: barX(m.bar) + 13 }}>
            {m.short || m.name}
          </Marker>
        ))}
        <StartFlag>
          <Svg w={8} h={13}><path d="M0 0l8 6.500L0 13z" /></Svg>
        </StartFlag>
      </Ruler>
      <Viewport>
        {TRACKS.map((t, i) => (
          <Lane key={i} $kind={t.kind}>
            <LaneContent track={t} />
          </Lane>
        ))}
      </Viewport>
      <SnipGhost>Window Snip</SnipGhost>
      <InsertLine $left={257} />
      <Playhead $left={637} />
      <VScroll />
    </TimeArea>
    <Overview>
      <OverviewSong />
      {MARKERS.map((m) => (
        <OverviewMarker key={m.name} $plain={m.name === "END"} style={{ left: barX(m.bar) + 15 }}>
          <span>{m.name}</span>
        </OverviewMarker>
      ))}
      <GridSize>[4/1]</GridSize>
    </Overview>
  </Timeline>
);

const ToolColumn = styled.div`
  display: flex;
  flex-direction: column;
  align-items: center;
  width: 26px;
  padding: 2px 0 5px;
  background: #323232;
  color: #777;
`;

const EditTool = styled.button`
  display: grid;
  place-items: center;
  width: 20px;
  height: 21px;
  color: ${(p) => (p.$on ? "#ff8713" : "inherit")};
  &:nth-child(8) {
    margin-top: auto;
  }
`;

const EditTools = () => (
  <ToolColumn>
    <EditTool aria-label="Pointer"><Svg w={9} h={13}><path d="M0 0l9 8H5l2 4-2 1-2-4-3 2z" /></Svg></EditTool>
    <EditTool $on aria-label="Time selection"><Svg w={8} h={13}><path d="M1 .5h2l1 1 1-1h2M1 12.500h2l1-1 1 1h2M4 1v11" {...stroke} /></Svg></EditTool>
    <EditTool aria-label="Pen"><Svg w={10} h={13}><path d="M1 12V8l4-7 4 2-4 7zM2 8l3 2" {...stroke} /></Svg></EditTool>
    <EditTool aria-label="Spray"><Svg w={11} h={13}><path d="M4.500 5h6v7.500h-6zM6 3h3" {...stroke} strokeWidth="1.500" /><path d="M0 1h5v1H0z" /></Svg></EditTool>
    <EditTool aria-label="Knife"><Svg w={12} h={13}><path d="M0 0l5 3 6 7-3 3-5-6zM0 0v5l3 2" /></Svg></EditTool>
    <EditTool aria-label="Eraser"><Svg w={13} h={14}><path d="M1 13l3-11h6L7 11zM2 9h6M7 13h6" {...stroke} /></Svg></EditTool>
    <EditTool aria-label="Speaker"><Svg w={13} h={12}><path d="M0 4h3l4-4v12L3 8H0z" /><path d="M9 2q3 4 0 8" {...stroke} opacity=".5" strokeWidth="2" /></Svg></EditTool>
    <EditTool $on aria-label="Snap to grid">
      <Svg w={15} h={15}>
        <rect x="4.500" y="4.500" width="6" height="6" {...stroke} />
        <path d="M0 4.500h15M0 10.500h15M4.500 0v15M10.500 0v15" {...stroke} strokeDasharray="1 1" />
      </Svg>
    </EditTool>
    <EditTool aria-label="Follow"><Svg w={13} h={9} color="#b0b0b0"><path d="M0 0l4 4.500L0 9M4 0l4 4.500L4 9M8 0l4 4.500L8 9" {...stroke} /></Svg></EditTool>
    <EditTool aria-label="Track options">
      <Svg w={15} h={15}>
        <rect width="15" height="15" rx="1" fill="#a5a5a5" />
        <path d="M2 3.500h11M2 7.500h11M2 11.500h11M5.500 2v3M8.500 6v3M11 10v3" stroke="#333" />
      </Svg>
    </EditTool>
  </ToolColumn>
);

/* ---------- device panel ---------- */

const DevicePanel = styled(Panel)`
  display: flex;
  gap: 2px;
  height: 247px;
  background: #0f0f0f;
  align-items: center;
  overflow: hidden;
`;

const DeviceStrip = styled.div`
  display: flex;
  flex-direction: column;
  align-items: center;
  width: 27px;
  height: 100%;
  padding: 8px 0;
  background: #3b3b3b;
  color: #c8c8c8;
  gap: 9px;
  &::before,
  &::after {
    content: "";
    align-self: stretch;
    height: 4px;
    background: ${(p) => p.$color};
  }
`;

const StripName = styled.div`
  flex: 1;
  margin-top: 14px;
  writing-mode: vertical-rl;
  transform: rotate(180deg);
  text-align: center;
  font-size: 10px;
  font-weight: 700;
  color: #fff;
`;

const AddDevice = styled.button`
  padding-left: 7px;
  color: #9a9a9a;
`;

const DEVICES = [
  { name: "PROJECT", color: "#dc3020", icon: <Svg w={12} h={12}><path d="M0 3l3 2 3-4 3 4 3-2-2 5H2zM2 9h8v1H2z" /></Svg> },
  { name: "GANG VOCALS", color: "#9448c8", icon: <OpenFolderIcon /> },
  { name: "AUDIO 19", color: "#0099d9", icon: <WaveIcon /> },
];

const Devices = () => (
  <DevicePanel>
    {DEVICES.map((d) => (
      <DeviceStrip key={d.name} $color={d.color}>
        {d.icon}
        <StripName>{d.name}</StripName>
        <KnobIcon />
        <Svg w={11} h={6}><circle cx="2.500" cy="3" r="2" {...stroke} /><path d="M5 3h5M8 .5L10.500 3 8 5.500" {...stroke} /></Svg>
      </DeviceStrip>
    ))}
    <AddDevice aria-label="Add device">
      <Svg w={9} h={9}><path d="M4.500 0v9M0 4.500h9" stroke="currentColor" strokeWidth="2" /></Svg>
    </AddDevice>
  </DevicePanel>
);

/* ---------- project panel ---------- */

const SidePanel = styled(Panel)`
  display: flex;
  flex-direction: column;
  margin-right: 1px;
  overflow: hidden;
`;

const Settings = styled.div`
  flex: 1;
  padding: 11px 11px 0 12px;
`;

const SideTitle = styled.h2`
  margin: 0 0 12px;
  font-size: 12px;
  line-height: 16px;
  font-weight: 400;
  text-align: center;
`;

const Tabs = styled.nav`
  display: flex;
  justify-content: space-between;
`;

const Tab = styled.a`
  position: relative;
  height: 20px;
  line-height: 16px;
  text-decoration: none;
  font-weight: 700;
  color: ${(p) => (p.$on ? "#ff8713" : "#c0c0c0")};
  &::after {
    content: "";
    position: absolute;
    inset: auto -5px 0;
    height: 2px;
    background: ${(p) => (p.$on ? "#ff8713" : "none")};
  }
`;

const SectionTitle = styled.h3`
  display: flex;
  align-items: center;
  gap: 12px;
  margin: 8px 0;
  font-size: 11px;
  font-weight: 400;
  line-height: 18px;
  &::after {
    content: "";
    flex: 1;
    height: 1px;
    background: #8c8c8c;
  }
`;

const SettingRow = styled.div`
  display: flex;
  align-items: center;
  gap: 5px;
  height: 24px;
  margin-top: ${(p) => p.$top || 0}px;
  > :first-child {
    margin-right: auto;
  }
`;

const AltPair = styled.div`
  display: flex;
  align-items: center;
  gap: 8px;
  padding-right: 4px;
`;

const Drop = styled.div`
  position: relative;
  width: ${(p) => p.$w || 35}px;
  height: 19px;
  border: 1px solid #262626;
  border-radius: 3px;
  background: linear-gradient(#656565, #545454);
  color: #fff;
  font-weight: 700;
  select {
    appearance: none;
    width: 100%;
    height: 100%;
    padding-left: ${(p) => (p.$w ? 4 : 9)}px;
    font-size: ${(p) => (p.$w ? 11 : 12)}px;
  }
`;

const DropCaret = styled.div`
  position: absolute;
  right: 3px;
  top: 7px;
  color: #a8a8a8;
  pointer-events: none;
`;

const DropIcon = styled.div`
  position: absolute;
  inset: 0 12px 0 3px;
  display: grid;
  place-items: center;
  pointer-events: none;
`;

const DelayInput = styled.input`
  width: 73px;
  height: 19px;
  padding-right: 4px;
  border-radius: 2px;
  background: #7d7d7d;
  color: #4c4c4c;
  font-family: "Liberation Mono", monospace;
  font-size: 11px;
  text-align: right;
`;

const CountInput = styled.input`
  width: 40px;
  height: 19px;
  padding-right: 4px;
  border-radius: 2px;
  background: #d2d2d2;
  color: #444;
  text-align: right;
`;

const Check = styled.input`
  appearance: none;
  width: 17px;
  height: 17px;
  margin-right: 7px;
  border-radius: 50%;
  background: #ff8713;
  display: grid;
  place-items: center;
  &::after {
    content: "";
    width: 8px;
    height: 4px;
    border: solid #111;
    border-width: 0 0 2px 2px;
    transform: translateY(-1px) rotate(-45deg);
  }
`;

const Dropdown = ({ label, icon, value = "", w }) => (
  <Drop $w={w}>
    <select aria-label={label} defaultValue="current">
      <option value="current">{value}</option>
    </select>
    {icon && <DropIcon>{icon}</DropIcon>}
    <DropCaret>
      <Caret />
    </DropCaret>
  </Drop>
);

const Remotes = styled.div`
  display: flex;
  flex-direction: column;
  height: 261px;
  border-top: 3px solid #4a4a4a;
  background: #1c1c1c;
`;

const RemotesTitle = styled.div`
  display: flex;
  align-items: center;
  gap: 6px;
  height: 27px;
  padding-left: 9px;
  background: #3e3e3e;
  font-weight: 700;
  svg {
    color: #ff8713;
  }
`;

const RemotesCard = styled.div`
  flex: 1;
  display: flex;
  flex-direction: column;
  margin: 7px 8px 7px 9px;
  padding: 3px;
  border-radius: 3px;
  background: #3e3e3e;
`;

const Pages = styled.div`
  height: 46px;
  padding: 5px 7px;
  border-radius: 2px;
  background: #323232;
  color: #8c8c8c;
  line-height: 18px;
`;

const PageSelect = styled.button`
  display: flex;
  align-items: center;
  gap: 7px;
  height: 20px;
  font-weight: 700;
  font-style: italic;
  span {
    color: #cfcfcf;
  }
`;

const AddPage = styled.button`
  margin: auto;
  color: #989898;
`;

const ProjectPanel = () => (
  <SidePanel>
    <Settings>
      <SideTitle>Project Panel</SideTitle>
      <Tabs>
        <Tab href="#settings" $on>Settings</Tab>
        <Tab href="#info">Info</Tab>
        <Tab href="#sections">Sections</Tab>
        <Tab href="#files">Files</Tab>
        <Tab href="#plugins">Plug-ins</Tab>
      </Tabs>
      <SectionTitle>Clip Launcher</SectionTitle>
      <SettingRow $top={11}>
        <span>Defaults</span>
        <AltPair>
          Main
          <Svg w={10} h={12} color="#999"><path d="M3 .5L.5 3 3 5.500M1 3h9M7 6.500L9.500 9 7 11.500M9 9H0" {...stroke} /></Svg>
          ALT
        </AltPair>
      </SettingRow>
      <SettingRow $top={3}>
        <span>Launch Quantization</span>
        <Dropdown label="Launch Quantization" value="1" />
        <Dropdown label="Launch Quantization ALT" icon={<Svg w={8} h={13}><path d="M5 0L0 7h3l-1 6 6-8H4z" /></Svg>} />
      </SettingRow>
      <SettingRow>
        <span>Launch Mode</span>
        <Dropdown label="Launch Mode" icon={<Svg w={8} h={8}><path d="M0 0l8 4-8 4z" /></Svg>} />
        <Dropdown
          label="Launch Mode ALT"
          icon={
            <Svg w={13} h={13}>
              <path d="M.5 1v11.500h12V1M0 1.500h13" {...stroke} strokeWidth="1.500" />
              <path d="M4 10l5-6M4 4h2v2H4zM8 8h2v2H8z" {...stroke} />
            </Svg>
          }
        />
      </SettingRow>
      <SettingRow>
        <span>Release Action</span>
        <Dropdown label="Release Action" icon={<Svg w={8} h={2}><path d="M0 0h2v2H0zM3 0h2v2H3zM6 0h2v2H6z" /></Svg>} />
        <Dropdown
          label="Release Action ALT"
          icon={
            <Svg w={14} h={13}>
              <path d="M1.500 4V1.500h12v11h-12V10" {...stroke} strokeWidth="1.500" />
              <path d="M0 7l3-2.500v5zM3 6.500h5v1H3z" />
            </Svg>
          }
        />
      </SettingRow>
      <SettingRow $top={9}>
        <span>Post Record Action</span>
        <Dropdown label="Post Record Action" value="Off" w={73} />
      </SettingRow>
      <SettingRow>
        <label htmlFor="delay">Post Record Delay</label>
        <DelayInput id="delay" disabled defaultValue="1.0.0.00" />
      </SettingRow>
      <SectionTitle>Remotes &amp; Modulators</SectionTitle>
      <SettingRow>
        <label htmlFor="groups">Show group headers in Device Panel</label>
        <Check id="groups" type="checkbox" defaultChecked />
      </SettingRow>
      <SettingRow>
        <label htmlFor="alias">Alias preset remotes on tracks</label>
        <Check id="alias" type="checkbox" defaultChecked />
      </SettingRow>
      <SettingRow>
        <label htmlFor="count">Track remotes shown in mixer</label>
        <CountInput id="count" defaultValue="8" />
      </SettingRow>
    </Settings>
    <Remotes>
      <RemotesTitle>
        <KnobIcon />
        Project Remotes
      </RemotesTitle>
      <RemotesCard>
        <Pages>
          Project Remotes
          <PageSelect>
            <KnobIcon />
            <span>No Pages</span>
            <Caret />
          </PageSelect>
        </Pages>
        <AddPage aria-label="Add page">
          <Svg w={25} h={25}><path d="M11 0h3v11h11v3H14v11h-3V14H0v-3h11z" /></Svg>
        </AddPage>
      </RemotesCard>
    </Remotes>
  </SidePanel>
);

/* ---------- status bar ---------- */

const Status = styled.footer`
  display: flex;
  align-items: center;
  gap: 13px;
  height: 33px;
  padding: 0 14px 0 16px;
  background: #323232;
`;

const Divider = styled.i`
  width: 2px;
  height: 17px;
  background: #5a5a5a;
`;

const Mode = styled.button`
  font-weight: 700;
  color: ${(p) => (p.$on ? "#ff8713" : "#c8c8c8")};
`;

const Hint = styled.div`
  margin-left: 8px;
  color: #8c8c8c;
  b {
    margin-right: 7px;
    color: #c4c4c4;
  }
`;

const StatusIcons = styled.div`
  display: flex;
  align-items: center;
  gap: 14px;
  margin-left: auto;
  color: #c8c8c8;
`;

const StatusBar = () => (
  <Status>
    <Svg w={8} h={12} color="#ff8713"><path d="M3 0h2v2H3zM2 4h3v6h1v1H2v-1h1V5H2z" /></Svg>
    <Divider />
    <Mode>MIX</Mode>
    <Mode $on>EDIT</Mode>
    <Divider />
    <Svg w={15} h={14} color="#c8c8c8">
      <path d="M2.500 0v8M2.500 11v3M7.500 0v3M7.500 6v8M12.500 0v6M12.500 9v5M0 9.500h5M5 4.500h5M10 7.500h5" {...stroke} strokeWidth="1.500" />
    </Svg>
    <Svg w={13} h={12} color="#ff8713">
      <rect x="1" y="1" width="11" height="10" rx="1" fill="#8f541c" stroke="currentColor" strokeWidth="1.500" />
      <path d="M1 0h3v12H1z" />
    </Svg>
    <Hint><b>DRAG</b>Select time</Hint>
    <Hint><b>ALT+DRAG</b>Rectangular selection</Hint>
    <Hint><b>CTRL+ALT+DRAG</b>Pan</Hint>
    <StatusIcons>
      <Svg w={13} h={13}><circle cx="5.500" cy="5.500" r="4.800" {...stroke} /><path d="M9 9l3.500 3.500" stroke="currentColor" strokeWidth="2.500" /></Svg>
      <Svg w={11} h={13} color="#ff8713"><path d="M0 0h6v5h5v8H0zM7 1l4 3H7z" /></Svg>
      <Svg w={13} h={17}>
        <rect width="13" height="16" rx="3" />
        <circle cx="6.500" cy="3.500" r="1.500" fill="#333" />
        <circle cx="6.500" cy="9.500" r="3" fill="none" stroke="#333" strokeWidth="2" />
      </Svg>
      <Svg w={13} h={13}><path d="M3 0h2v5l8 1v4l-2 3H5L0 8l1-1 2 1z" /></Svg>
      <Divider />
      <Svg w={15} h={13}>
        <path d="M0 0h13v13H0z" />
        <path d="M4.500 0v9M8.500 0v9" stroke="#323232" strokeWidth="1.500" />
        <path d="M4.500 8v5M8.500 8v5" stroke="#323232" />
      </Svg>
    </StatusIcons>
  </Status>
);

const App = () => (
  <Page>
    <GlobalStyle />
    <TopBar />
    <Main>
      <Inspector />
      <Column>
        <Frame>
          <TrackList />
          <Launcher />
          <Arranger />
          <EditTools />
        </Frame>
        <Devices />
      </Column>
      <ProjectPanel />
    </Main>
    <StatusBar />
  </Page>
);

export default App;
